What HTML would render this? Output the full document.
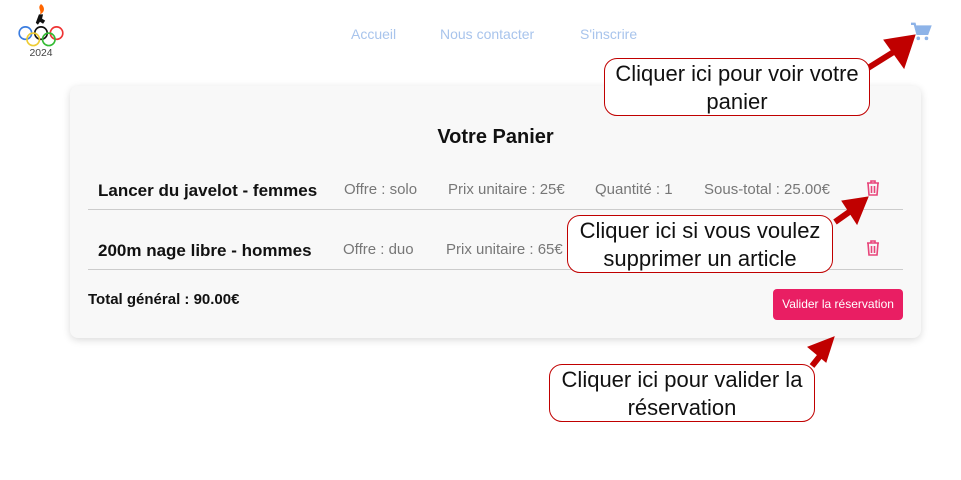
<!DOCTYPE html>
<html><head><meta charset="utf-8"><style>
body{margin:0;width:961px;height:480px;background:#fff;font-family:"Liberation Sans",sans-serif;position:relative;overflow:hidden}
.abs{position:absolute}
.nav{top:26px;font-size:14px;color:#a8c4ec}
.card{left:70px;top:86px;width:851px;height:252px;background:#f8f8f8;border-radius:8px;box-shadow:0 2px 8px rgba(0,0,0,.15)}
.g{color:#777;font-size:15px}
.b{font-weight:bold;font-size:17px;color:#111}
.line{height:1px;background:#ccc;left:88px;width:815px}
.call{background:#fff;border:1.5px solid #c00000;border-radius:13px;font-size:22px;color:#111;text-align:center;line-height:28px;box-sizing:border-box;white-space:nowrap}
</style></head><body>
<svg class="abs" style="left:17px;top:3px" width="48" height="54" viewBox="0 0 46 52">
<path d="M23 1c-4 4 1 6-1 10 5-2 5-7 1-10z" fill="#f60"/>
<path d="M21 11h4l-1 4 3 2-2 3-3-2-2 3-2-2z" fill="#111"/>
<circle cx="8" cy="29" r="6" fill="none" stroke="#3b7de0" stroke-width="1.6"/>
<circle cx="23" cy="29" r="6" fill="none" stroke="#111" stroke-width="1.6"/>
<circle cx="38" cy="29" r="6" fill="none" stroke="#e33" stroke-width="1.6"/>
<circle cx="15.5" cy="35" r="6" fill="none" stroke="#ec3" stroke-width="1.6"/>
<circle cx="30.5" cy="35" r="6" fill="none" stroke="#3b3" stroke-width="1.6"/>
<text x="23" y="51" font-size="10" text-anchor="middle" fill="#444" font-family="Liberation Sans">2024</text>
</svg>
<div class="abs nav" style="left:351px">Accueil</div>
<div class="abs nav" style="left:440px">Nous contacter</div>
<div class="abs nav" style="left:580px">S'inscrire</div>
<svg class="abs" style="left:910px;top:22px" width="22" height="20" viewBox="0 0 24 22"><path d="M1 2h4l3 11h11l3-8H7" fill="none" stroke="#8db3e8" stroke-width="2.5"/><path d="M7 5h15l-3 8H8z" fill="#8db3e8"/><circle cx="9" cy="18" r="2" fill="#8db3e8"/><circle cx="18" cy="18" r="2" fill="#8db3e8"/></svg>
<div class="abs card"></div>
<div class="abs b" style="left:0;width:991px;text-align:center;top:126px;font-size:20px">Votre Panier</div>
<div class="abs b" style="left:98px;top:181px">Lancer du javelot - femmes</div>
<div class="abs g" style="left:344px;top:181px">Offre : solo</div>
<div class="abs g" style="left:448px;top:181px">Prix unitaire : 25€</div>
<div class="abs g" style="left:595px;top:181px">Quantité : 1</div>
<div class="abs g" style="left:704px;top:181px">Sous-total : 25.00€</div>
<div class="abs line" style="top:209px"></div>
<div class="abs b" style="left:98px;top:241px">200m nage libre - hommes</div>
<div class="abs g" style="left:343px;top:241px">Offre : duo</div>
<div class="abs g" style="left:446px;top:241px">Prix unitaire : 65€</div>
<div class="abs line" style="top:269px"></div>
<svg class="abs" style="left:865px;top:179px" width="16" height="18" viewBox="0 0 16 18"><path d="M2 4h12M6 4V2h4v2M3 4l1 12h8l1-12M6.5 7v7M9.5 7v7" fill="none" stroke="#e8457a" stroke-width="1.6"/></svg>
<svg class="abs" style="left:865px;top:239px" width="16" height="18" viewBox="0 0 16 18"><path d="M2 4h12M6 4V2h4v2M3 4l1 12h8l1-12M6.5 7v7M9.5 7v7" fill="none" stroke="#e8457a" stroke-width="1.6"/></svg>
<div class="abs b" style="left:88px;top:291px;font-size:15px">Total général : 90.00€</div>
<div class="abs" style="left:773px;top:289px;width:130px;height:31px;background:#e91e63;border-radius:4px;color:#fff;font-size:12px;line-height:31px;text-align:center">Valider la réservation</div>
<svg class="abs" style="left:0;top:0" width="961" height="480">
<g fill="#c00000" stroke="#c00000">
<line x1="868" y1="68" x2="900" y2="48" stroke-width="6"/><polygon points="915,35 884,40 904,68"/>
<line x1="835" y1="222" x2="852" y2="210" stroke-width="6"/><polygon points="868,197 842,201 857,224"/>
<line x1="812" y1="366" x2="820" y2="356" stroke-width="6"/><polygon points="834,337 808,347 826,362"/>
</g></svg>
<div class="abs call" style="left:604px;top:58px;width:266px;height:58px;padding-top:1px">Cliquer ici pour voir votre<br>panier</div>
<div class="abs call" style="left:567px;top:215px;width:266px;height:58px;padding-top:1px">Cliquer ici si vous voulez<br>supprimer un article</div>
<div class="abs call" style="left:549px;top:364px;width:266px;height:58px;padding-top:1px">Cliquer ici pour valider la<br>réservation</div>
</body></html>
